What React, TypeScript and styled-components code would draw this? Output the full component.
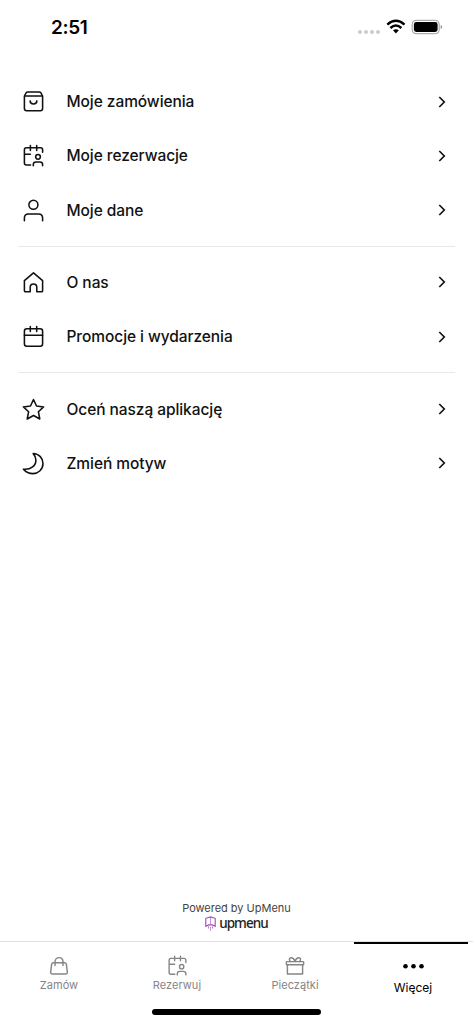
import React from "react";
import styled, { createGlobalStyle } from "styled-components";

const GlobalStyle = createGlobalStyle`
  * { box-sizing: border-box; }
  body { margin: 0; background: #fff; }
`;

const Screen = styled.div`
  width: 473px;
  height: 1024px;
  display: flex;
  flex-direction: column;
  background: #fff;
  color: #111;
  font-family: Inter, sans-serif;
  overflow: hidden;
`;

const StatusBar = styled.header`
  height: 74.6px;
  flex: none;
  display: flex;
  align-items: flex-start;
  justify-content: space-between;
  padding: 15px 30px 0 51px;
`;

const Clock = styled.span`
  font-size: 19px;
  font-weight: 600;
  line-height: 26px;
  letter-spacing: -0.35px;
  color: #000;
`;

const StatusIcons = styled.svg`
  width: 86px;
  height: 24px;
  display: block;
`;

const Menu = styled.nav`
  flex: 1;
  display: flex;
  flex-direction: column;
`;

const Section = styled.section`
  margin: 0 18px;
  & + & {
    border-top: 1px solid #e8e8e8;
    margin-top: 8.5px;
    padding-top: 8.7px;
  }
`;

const MenuRow = styled.a`
  height: 54.2px;
  display: flex;
  align-items: center;
  padding: 0 3px;
`;

const LineIcon = styled.svg<{ $size: number; $weight: number }>`
  width: ${(p) => p.$size}px;
  height: ${(p) => p.$size}px;
  flex: none;
  display: block;
  fill: none;
  stroke: currentColor;
  stroke-width: ${(p) => p.$weight};
  stroke-linecap: round;
  stroke-linejoin: round;
`;

const RowLabel = styled.span`
  flex: 1;
  margin-left: 20.5px;
  padding-top: 1px;
  font-size: 15.5px;
  font-weight: 500;
  line-height: 24px;
  letter-spacing: -0.07px;
`;

const Chevron = styled.svg`
  width: 16px;
  height: 16px;
  margin-right: 2px;
  fill: none;
  stroke: #111;
  stroke-width: 1.65;
`;

const Powered = styled.footer`
  height: 40px;
  display: flex;
  flex-direction: column;
  align-items: center;
  font-size: 11px;
  line-height: 14px;
  letter-spacing: -0.02px;
  color: #444;
`;

const Brand = styled.div`
  display: flex;
  align-items: center;
  gap: 3px;
  height: 16px;
`;

const BrandName = styled.span`
  font-family: "Noto Sans", sans-serif;
  font-size: 13.5px;
  font-weight: 500;
  line-height: 16px;
  letter-spacing: -0.95px;
  color: #222;
`;

const TabBar = styled.div`
  height: 83px;
  flex: none;
  border-top: 1px solid #e2e2e2;
  display: flex;
  flex-direction: column;
  align-items: center;
`;

const Tabs = styled.div`
  width: 100%;
  height: 67px;
  padding-right: 1px;
  display: grid;
  grid-template-columns: repeat(4, 1fr);
`;

const Tab = styled.a<{ $active?: boolean }>`
  position: relative;
  display: flex;
  flex-direction: column;
  align-items: center;
  padding-top: ${(p) => (p.$active ? 12.5 : 12)}px;
  color: ${(p) => (p.$active ? "#000" : "#858585")};
`;

const IconSlot = styled.span`
  height: 23px;
  display: flex;
  align-items: center;
`;

const TabLabel = styled.span<{ $active?: boolean }>`
  font-size: ${(p) => (p.$active ? 12 : 11)}px;
  line-height: 16px;
  margin-top: ${(p) => (p.$active ? 2 : 0)}px;
  letter-spacing: ${(p) => (p.$active ? 0 : 0.05)}px;
`;

const ActiveMark = styled.i`
  position: absolute;
  top: 0;
  left: 0.3px;
  width: 113.7px;
  height: 2px;
  background: #000;
`;

const HomeIndicator = styled.div`
  width: 169px;
  height: 6px;
  border-radius: 3px;
  background: #000;
`;

const shapes: Record<string, React.ReactNode> = {
  bag: (
    <>
      <path d="M3.4 7 5.1 3.9Q5.6 2.9 6.8 2.9H18.2Q19.4 2.9 19.9 3.9L21.6 7V19.5Q21.6 21.7 19.4 21.7H5.6Q3.4 21.7 3.4 19.5Z" />
      <path d="M3.8 7H21.2M9.1 11.9C9.3 16 15.7 16 15.9 11.9" />
    </>
  ),
  booking: (
    <>
      <path d="M9.6 22H5.4Q3.4 22 3.4 20V6.8Q3.4 4.8 5.4 4.8H19.6Q21.6 4.8 21.6 6.8V9.2M3.4 11.2H9.4M9.4 2.4V7.4M15.7 2.4V7.4" />
      <circle cx="17" cy="13.8" r="2.35" />
      <path d="M12.3 22.7V21.5Q12.3 18.9 14.9 18.9H19Q21.6 18.9 21.6 21.5V22.7" />
    </>
  ),
  user: (
    <>
      <circle cx="12.4" cy="6.8" r="4.5" />
      <path d="M3.4 22.7V20Q3.4 15.9 7.5 15.9H17.5Q21.6 15.9 21.6 20V22.7" />
    </>
  ),
  home: (
    <path d="M12.5 2.8 21.6 10.6V20.7Q21.6 21.8 20.5 21.8H15.8V17.2C15.8 12.8 9.2 12.8 9.2 17.2V21.8H4.5Q3.4 21.8 3.4 20.7V10.6Z" />
  ),
  calendar: (
    <>
      <rect x="3.4" y="4.8" width="18.2" height="17.4" rx="2.4" />
      <path d="M3.4 11.3H21.6M9.3 2.4V7.4M15.7 2.4V7.4" />
    </>
  ),
  star: (
    <path d="M12.5 2.5 15.5 9 22.6 9.9 17.4 14.8 18.8 22 12.5 18.5 6.2 22 7.6 14.8 2.4 9.9 9.5 9Z" />
  ),
  moon: (
    <path d="M12.2 2.6C18.1 2.8 22 7.2 22 12.5C22 18.3 17.4 22.6 12 22.6C8.2 22.6 4.7 20.9 2.4 18.2C9.8 19 15.5 14.5 14.8 8.5C14.5 5.7 13.5 4 12.2 2.6Z" />
  ),
  handbag: (
    <>
      <path d="M5.6 8.5H19.4Q21.4 8.5 21.7 10.5L22.9 19.8Q23.2 22.6 20.5 22.6H4.5Q1.8 22.6 2.1 19.8L3.3 10.5Q3.6 8.5 5.6 8.5Z" />
      <path d="M7.5 12V7.5C7.5 .2 17.5 .2 17.5 7.5V12" />
    </>
  ),
  gift: (
    <>
      <rect x="1.7" y="7" width="21.6" height="4" rx=".8" />
      <path d="M3 11V22.6H22V11M12.5 7C10.5 1 5.6 1.2 5.5 4.3Q5.5 6 7 7M12.5 7C14.5 1 19.4 1.2 19.5 4.3Q19.5 6 18 7" />
    </>
  ),
  dots: (
    <g fill="currentColor" stroke="none">
      <circle cx="3.8" cy="12.3" r="2.5" />
      <circle cx="12.5" cy="12.3" r="2.5" />
      <circle cx="21.2" cy="12.3" r="2.5" />
    </g>
  ),
};

function Icon({ name, size = 25, weight = 1.55 }: { name: string; size?: number; weight?: number }) {
  return (
    <LineIcon viewBox="0 0 25 25" $size={size} $weight={weight}>
      {shapes[name]}
    </LineIcon>
  );
}

const sections = [
  [
    ["bag", "Moje zamówienia"],
    ["booking", "Moje rezerwacje"],
    ["user", "Moje dane"],
  ],
  [
    ["home", "O nas"],
    ["calendar", "Promocje i wydarzenia"],
  ],
  [
    ["star", "Oceń naszą aplikację"],
    ["moon", "Zmień motyw"],
  ],
];

const tabs = [
  { icon: "handbag", label: "Zamów", size: 20, weight: 1.8 },
  { icon: "booking", label: "Rezerwuj", size: 23, weight: 1.5 },
  { icon: "gift", label: "Pieczątki", size: 20, weight: 1.8 },
  { icon: "dots", label: "Więcej", size: 23, weight: 1, active: true },
];

export default function App() {
  return (
    <Screen>
      <GlobalStyle />
      <StatusBar>
        <Clock>2:51</Clock>
        <StatusIcons viewBox="0 0 86 24">
          <g fill="#ccc">
            <circle cx="3" cy="17" r="2" />
            <circle cx="9" cy="17" r="2" />
            <circle cx="15" cy="17" r="2" />
            <circle cx="21" cy="17" r="2" />
          </g>
          <g fill="none" stroke="#000" strokeWidth="2.4">
            <path d="M30.3 9.6Q38.9 1.9 47.5 9.6" />
            <path d="M33.4 13Q38.9 8.1 44.4 13" />
          </g>
          <path d="M36 15.3Q38.9 13 41.8 15.3L38.9 18.5Z" />
          <rect x="55.2" y="5.3" width="27" height="13.4" rx="3.8" fill="none" stroke="#999" />
          <rect x="56.9" y="7" width="23.7" height="10" rx="2.4" />
          <path d="M83.6 10Q85.3 10.5 85.3 12T83.6 14Z" fill="#999" />
        </StatusIcons>
      </StatusBar>
      <Menu>
        {sections.map((rows, i) => (
          <Section key={i}>
            {rows.map(([icon, label]) => (
              <MenuRow key={label}>
                <Icon name={icon} />
                <RowLabel>{label}</RowLabel>
                <Chevron viewBox="0 0 16 16">
                  <path d="M5.3 3 10.3 8 5.3 13" />
                </Chevron>
              </MenuRow>
            ))}
          </Section>
        ))}
      </Menu>
      <Powered>
        <span>Powered by UpMenu</span>
        <Brand>
          <svg width="11" height="15" viewBox="0 0 11 15" fill="none" stroke="#a04bb5" strokeWidth="1.1">
            <path d="M.8 10.3V2.3L5.5.9 10.2 2.3V10.3L7.4 8.9H3.6Z" />
            <path d="M5.5 1V8.9" strokeWidth=".6" />
            <path d="M3.5 10.5V13M5.5 11.2V14.5M7.5 10.5V13" strokeWidth=".9" strokeDasharray="1.3 .8" />
          </svg>
          <BrandName>upmenu</BrandName>
        </Brand>
      </Powered>
      <TabBar>
        <Tabs>
          {tabs.map((t) => (
            <Tab key={t.label} $active={t.active}>
              {t.active && <ActiveMark />}
              <IconSlot>
                <Icon name={t.icon} size={t.size} weight={t.weight} />
              </IconSlot>
              <TabLabel $active={t.active}>{t.label}</TabLabel>
            </Tab>
          ))}
        </Tabs>
        <HomeIndicator />
      </TabBar>
    </Screen>
  );
}
